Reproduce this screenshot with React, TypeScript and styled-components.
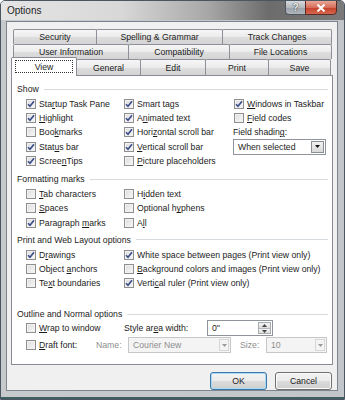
import React from 'react';
import styled, { createGlobalStyle } from 'styled-components';

const GlobalStyle = createGlobalStyle`
  body {
    margin: 0;
    font-family: Tahoma, "Liberation Sans", Arial, sans-serif;
    font-size: 8.7px;
    color: #1c1c1c;
  }
  * { box-sizing: border-box; }
`;

const Window = styled.div`
  width: 345px;
  height: 400px;
  display: flex;
  flex-direction: column;
  background: linear-gradient(90deg, #d9dbdd 0%, #cfd2d5 40%, #a3a8ad 75%, #b9bec3 100%);
  border: 1px solid #4c5660;
  border-radius: 5px 5px 0 0;
  overflow: hidden;
`;

const TitleBar = styled.div`
  height: 20px;
  display: flex;
  justify-content: space-between;
  align-items: flex-start;
  padding: 0 7px 0 6px;
  background: linear-gradient(90deg, #e4e4e4 0%, #d8d8d8 35%, #a8a8a8 60%, #6c6c6c 78%, #7a7a7a 100%);
`;

const Title = styled.span`
  margin-top: 4px;
  font-size: 10px;
  color: #1e1e1e;
`;

const CaptionButtons = styled.div`
  display: flex;
  margin-top: -1px;
`;

const HelpButton = styled.div`
  width: 20px;
  height: 15px;
  display: flex;
  align-items: center;
  justify-content: center;
  border: 1px solid #4d555d;
  border-right: none;
  border-radius: 0 0 0 4px;
  background: linear-gradient(#d6dade, #b3b9bf 50%, #9aa1a8 51%, #aeb5bb);
  color: #f4f6f8;
  font-weight: bold;
  font-size: 10px;
  text-shadow: 0 0 1px #333, 0 0 1px #333;
`;

const CloseButton = styled.div`
  width: 32px;
  height: 15px;
  display: flex;
  align-items: center;
  justify-content: center;
  border: 1px solid #5a2b24;
  border-radius: 0 0 4px 0;
  background: linear-gradient(#e9a596, #d66e5a 50%, #c2402a 51%, #d8674f);
`;

const Frame = styled.div`
  flex: 1;
  display: flex;
  padding: 1px 6px 6px 5px;
  background: linear-gradient(90deg, #c7cacd, #c2c6ca);
  border-bottom: 2px solid #3f5f63;
`;

const Client = styled.div`
  flex: 1;
  display: flex;
  flex-direction: column;
  padding: 7px 4px 0 4px;
  background: #f0f0f0;
  border: 1px solid #7c858d;
`;

const TabRow = styled.div<{ $inset?: number; $h?: number }>`
  display: flex;
  height: ${p => p.$h ?? 15}px;
  padding-left: ${p => p.$inset ?? 2}px;
`;

const Tab = styled.div<{ $w: number }>`
  width: ${p => p.$w}px;
  height: 100%;
  display: flex;
  align-items: center;
  justify-content: center;
  margin-right: -1px;
  border: 1px solid #8d9096;
  border-bottom: none;
  border-radius: 2px 2px 0 0;
  background: linear-gradient(#f6f6f6, #ebebeb 50%, #dddddd 51%, #d4d4d4);
  white-space: nowrap;
`;

const ActiveTab = styled.div<{ $w: number }>`
  position: relative;
  z-index: 2;
  width: ${p => p.$w}px;
  height: 19px;
  margin-top: -2px;
  margin-right: -1px;
  padding: 2px 3px 3px 3px;
  border: 1px solid #898c95;
  border-bottom: none;
  border-radius: 2px 2px 0 0;
  background: #fff;
`;

const FocusRect = styled.div`
  height: 100%;
  display: flex;
  align-items: center;
  justify-content: center;
  border: 1px dotted #333;
`;

const Panel = styled.div`
  height: 290px;
  padding: 7px 4px 0 5px;
  background: #fff;
  border: 1px solid #898c95;
`;

const Section = styled.div<{ $top?: number }>`
  margin-top: ${p => p.$top ?? 0}px;
`;

const GroupHeader = styled.div<{ $gap?: number }>`
  height: 12px;
  display: flex;
  align-items: center;
  gap: 5px;
  margin-bottom: ${p => p.$gap ?? 1.5}px;
  &::after {
    content: '';
    flex: 1;
    height: 1px;
    background: #d5dadf;
  }
`;

const OptionGrid = styled.div<{ $cols: string }>`
  display: grid;
  grid-template-columns: ${p => p.$cols};
  grid-auto-rows: 14.3px;
  padding-left: 9px;
`;

const Item = styled.label`
  display: flex;
  align-items: center;
  gap: 3px;
  white-space: nowrap;
`;

const Box = styled.span`
  width: 10px;
  height: 10px;
  flex: none;
  display: flex;
  align-items: center;
  justify-content: center;
  border: 1px solid #8f8f8f;
  background: linear-gradient(135deg, #dcdcdc, #f8f8f8);
  box-shadow: inset 0 0 0 1px #f2f2f2;
`;

const Cell = styled.span<{ $w?: number; $muted?: boolean }>`
  width: ${p => (p.$w ? `${p.$w}px` : 'auto')};
  flex: none;
  white-space: nowrap;
  color: ${p => (p.$muted ? '#8d8d8d' : 'inherit')};
`;

const Combo = styled.div<{ $w: number; $disabled?: boolean }>`
  width: ${p => p.$w}px;
  height: 16px;
  flex: none;
  display: flex;
  align-items: center;
  align-self: center;
  padding: 1px 1px 1px 4px;
  border: 1px solid ${p => (p.$disabled ? '#c5c7c9' : '#8e949a')};
  background: ${p => (p.$disabled ? '#f4f4f4' : '#fff')};
  color: ${p => (p.$disabled ? '#8d8d8d' : 'inherit')};
`;

const ComboText = styled.span`
  flex: 1;
  white-space: nowrap;
`;

const DropButton = styled.span<{ $disabled?: boolean }>`
  width: ${p => (p.$disabled ? 10 : 13)}px;
  height: 100%;
  display: flex;
  align-items: center;
  justify-content: center;
  border: 1px solid ${p => (p.$disabled ? '#d6d6d6' : '#8b8f94')};
  background: ${p => (p.$disabled ? '#f4f4f4' : 'linear-gradient(#f2f2f2, #d9d9d9)')};
`;

const Spin = styled.div`
  width: 13px;
  height: 100%;
  display: flex;
  flex-direction: column;
  border: 1px solid #a8acb0;
`;

const SpinHalf = styled.span`
  flex: 1;
  display: flex;
  align-items: center;
  justify-content: center;
  background: linear-gradient(#f4f4f4, #dedede);
  & + & { border-top: 1px solid #b5b9bd; }
`;

const OutlineRow = styled.div`
  height: 16px;
  display: flex;
  align-items: center;
  padding-left: 9px;
  margin-bottom: 1px;
`;

const ButtonBar = styled.div`
  display: flex;
  justify-content: flex-end;
  gap: 8px;
  margin-top: 7px;
  padding-right: 1px;
`;

const DialogButton = styled.div<{ $default?: boolean }>`
  width: 57px;
  height: 18px;
  display: flex;
  align-items: center;
  justify-content: center;
  border: 1px solid ${p => (p.$default ? '#3b79ab' : '#707070')};
  border-radius: 3px;
  background: linear-gradient(#f3f3f3, #ebebeb 50%, #dcdcdc 51%, #cfcfcf);
  box-shadow: ${p => (p.$default ? 'inset 0 0 0 1px #a9d9f5' : 'inset 0 0 0 1px #fafafa')};
`;

const Check = () => (
  <svg width="8" height="8" viewBox="0 0 8 8">
    <path d="M1 4.2 L3 6.3 L7 1.2" fill="none" stroke="#3a4d8a" strokeWidth="1.6" />
  </svg>
);

const Arrow = ({ up, color = '#111' }: { up?: boolean; color?: string }) => (
  <svg width="5" height="3" viewBox="0 0 5 3">
    <path d={up ? 'M0 3 L2.5 0 L5 3 Z' : 'M0 0 L5 0 L2.5 3 Z'} fill={color} />
  </svg>
);

// text with one access-key letter underlined
const Label = ({ text, u }: { text: string; u?: number }) => {
  if (u === undefined) return <span>{text}</span>;
  return (
    <span>
      {text.slice(0, u)}
      <u>{text[u]}</u>
      {text.slice(u + 1)}
    </span>
  );
};

const CheckItem = ({ text, u, checked }: { text: string; u?: number; checked?: boolean }) => (
  <Item>
    <Box>{checked && <Check />}</Box>
    <Label text={text} u={u} />
  </Item>
);

export default function App() {
  return (
    <>
      <GlobalStyle />
      <Window>
        <TitleBar>
          <Title>Options</Title>
          <CaptionButtons>
            <HelpButton>?</HelpButton>
            <CloseButton>
              <svg width="10" height="8" viewBox="0 0 10 8">
                <path d="M1.5 0.5 L8.5 7.5 M8.5 0.5 L1.5 7.5" stroke="#fff" strokeWidth="2" />
              </svg>
            </CloseButton>
          </CaptionButtons>
        </TitleBar>
        <Frame>
          <Client>
            <TabRow>
              <Tab $w={84}>Security</Tab>
              <Tab $w={127}>Spelling &amp; Grammar</Tab>
              <Tab $w={110}>Track Changes</Tab>
            </TabRow>
            <TabRow>
              <Tab $w={116}>User Information</Tab>
              <Tab $w={102}>Compatibility</Tab>
              <Tab $w={103}>File Locations</Tab>
            </TabRow>
            <TabRow $inset={0} $h={16}>
              <ActiveTab $w={66}>
                <FocusRect>View</FocusRect>
              </ActiveTab>
              <Tab $w={65}>General</Tab>
              <Tab $w={66}>Edit</Tab>
              <Tab $w={64}>Print</Tab>
              <Tab $w={63}>Save</Tab>
            </TabRow>
            <Panel>
              <Section>
                <GroupHeader>Show</GroupHeader>
                <OptionGrid $cols="98px 110px 1fr">
                  <CheckItem text="Startup Task Pane" u={3} checked />
                  <CheckItem text="Smart tags" u={8} checked />
                  <CheckItem text="Windows in Taskbar" u={0} checked />
                  <CheckItem text="Highlight" u={0} checked />
                  <CheckItem text="Animated text" u={1} checked />
                  <CheckItem text="Field codes" u={0} />
                  <CheckItem text="Bookmarks" u={3} />
                  <CheckItem text="Horizontal scroll bar" u={4} checked />
                  <Item style={{ marginLeft: -1 }}>
                    <Label text="Field shading:" u={12} />
                  </Item>
                  <CheckItem text="Status bar" u={4} checked />
                  <CheckItem text="Vertical scroll bar" u={0} checked />
                  <Combo $w={93} style={{ marginLeft: -1 }}>
                    <ComboText>When selected</ComboText>
                    <DropButton>
                      <Arrow />
                    </DropButton>
                  </Combo>
                  <CheckItem text="ScreenTips" u={5} checked />
                  <CheckItem text="Picture placeholders" u={0} />
                </OptionGrid>
              </Section>
              <Section $top={5.5}>
                <GroupHeader>Formatting marks</GroupHeader>
                <OptionGrid $cols="98px 1fr">
                  <CheckItem text="Tab characters" u={0} />
                  <CheckItem text="Hidden text" u={1} />
                  <CheckItem text="Spaces" u={0} />
                  <CheckItem text="Optional hyphens" u={10} />
                  <CheckItem text="Paragraph marks" u={10} checked />
                  <CheckItem text="All" u={1} />
                </OptionGrid>
              </Section>
              <Section $top={4}>
                <GroupHeader>Print and Web Layout options</GroupHeader>
                <OptionGrid $cols="98px 1fr">
                  <CheckItem text="Drawings" u={1} checked />
                  <CheckItem text="White space between pages (Print view only)" checked />
                  <CheckItem text="Object anchors" u={7} />
                  <CheckItem text="Background colors and images (Print view only)" u={0} />
                  <CheckItem text="Text boundaries" u={2} />
                  <CheckItem text="Vertical ruler (Print view only)" u={5} checked />
                </OptionGrid>
              </Section>
              <Section $top={18}>
                <GroupHeader $gap={0}>Outline and Normal options</GroupHeader>
                <OutlineRow>
                  <Cell $w={98}>
                    <Item>
                      <Box />
                      <Label text="Wrap to window" u={0} />
                    </Item>
                  </Cell>
                  <Cell $w={83}>
                    <Label text="Style area width:" u={8} />
                  </Cell>
                  <Combo $w={66}>
                    <ComboText>0"</ComboText>
                    <Spin>
                      <SpinHalf>
                        <Arrow up color="#444" />
                      </SpinHalf>
                      <SpinHalf>
                        <Arrow color="#444" />
                      </SpinHalf>
                    </Spin>
                  </Combo>
                </OutlineRow>
                <OutlineRow>
                  <Cell $w={70}>
                    <Item>
                      <Box />
                      <Label text="Draft font:" u={0} />
                    </Item>
                  </Cell>
                  <Cell $w={32} $muted>
                    Name:
                  </Cell>
                  <Combo $w={103} $disabled>
                    <ComboText>Courier New</ComboText>
                    <DropButton $disabled>
                      <Arrow color="#9a9a9a" />
                    </DropButton>
                  </Combo>
                  <Cell $w={26} $muted style={{ marginLeft: 9 }}>
                    Size:
                  </Cell>
                  <Combo $w={61} $disabled>
                    <ComboText>10</ComboText>
                    <DropButton $disabled>
                      <Arrow color="#9a9a9a" />
                    </DropButton>
                  </Combo>
                </OutlineRow>
              </Section>
            </Panel>
            <ButtonBar>
              <DialogButton $default>OK</DialogButton>
              <DialogButton>Cancel</DialogButton>
            </ButtonBar>
          </Client>
        </Frame>
      </Window>
    </>
  );
}
